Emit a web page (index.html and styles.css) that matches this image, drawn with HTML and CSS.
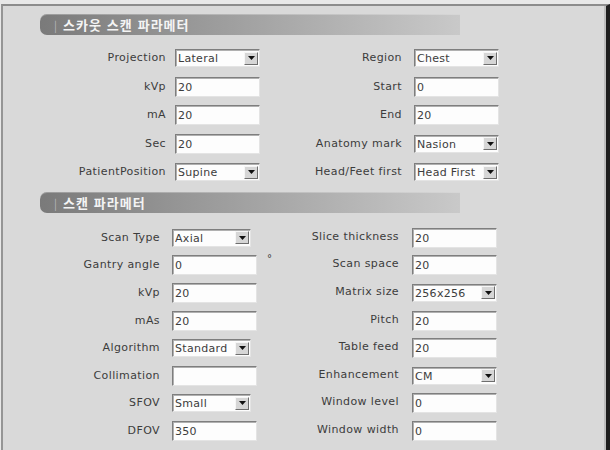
FILE: index.html
```html
<!DOCTYPE html>
<html>
<head>
    <meta charset="utf-8">
    <title>스캔 파라메터</title>
    <link rel="stylesheet" href="styles.css">
</head>
<body>
    <div class="window">
        <div class="section-header"><span class="bar">|</span>스카웃 스캔 파라메터</div>
        <div class="params params-scout">
            <div class="lbl">Projection</div>
            <div class="combo"><span class="combo-value">Lateral</span><span class="combo-btn"><svg width="7" height="4" viewBox="0 0 7 4"><path d="M0 0h7L3.5 4z"/></svg></span></div>
            <div class="lbl">Region</div>
            <div class="combo"><span class="combo-value">Chest</span><span class="combo-btn"><svg width="7" height="4" viewBox="0 0 7 4"><path d="M0 0h7L3.5 4z"/></svg></span></div>

            <div class="lbl">kVp</div>
            <input class="field" type="text" value="20">
            <div class="lbl">Start</div>
            <input class="field" type="text" value="0">

            <div class="lbl">mA</div>
            <input class="field" type="text" value="20">
            <div class="lbl">End</div>
            <input class="field" type="text" value="20">

            <div class="lbl">Sec</div>
            <input class="field" type="text" value="20">
            <div class="lbl">Anatomy mark</div>
            <div class="combo"><span class="combo-value">Nasion</span><span class="combo-btn"><svg width="7" height="4" viewBox="0 0 7 4"><path d="M0 0h7L3.5 4z"/></svg></span></div>

            <div class="lbl">PatientPosition</div>
            <div class="combo"><span class="combo-value">Supine</span><span class="combo-btn"><svg width="7" height="4" viewBox="0 0 7 4"><path d="M0 0h7L3.5 4z"/></svg></span></div>
            <div class="lbl">Head/Feet first</div>
            <div class="combo"><span class="combo-value">Head First</span><span class="combo-btn"><svg width="7" height="4" viewBox="0 0 7 4"><path d="M0 0h7L3.5 4z"/></svg></span></div>
        </div>

        <div class="section-header section-header-scan"><span class="bar">|</span>스캔 파라메터</div>
        <div class="params params-scan">
            <div class="lbl">Scan Type</div>
            <div class="combo combo-short"><span class="combo-value">Axial</span><span class="combo-btn"><svg width="7" height="4" viewBox="0 0 7 4"><path d="M0 0h7L3.5 4z"/></svg></span></div>
            <div class="lbl lbl-right">Slice thickness</div>
            <input class="field" type="text" value="20">

            <div class="lbl">Gantry angle</div>
            <input class="field" type="text" value="0">
            <div class="lbl lbl-right lbl-unit"><span class="unit">°</span><span>Scan space</span></div>
            <input class="field" type="text" value="20">

            <div class="lbl">kVp</div>
            <input class="field" type="text" value="20">
            <div class="lbl lbl-right">Matrix size</div>
            <div class="combo"><span class="combo-value">256x256</span><span class="combo-btn"><svg width="7" height="4" viewBox="0 0 7 4"><path d="M0 0h7L3.5 4z"/></svg></span></div>

            <div class="lbl">mAs</div>
            <input class="field" type="text" value="20">
            <div class="lbl lbl-right">Pitch</div>
            <input class="field" type="text" value="20">

            <div class="lbl">Algorithm</div>
            <div class="combo combo-short"><span class="combo-value">Standard</span><span class="combo-btn"><svg width="7" height="4" viewBox="0 0 7 4"><path d="M0 0h7L3.5 4z"/></svg></span></div>
            <div class="lbl lbl-right">Table feed</div>
            <input class="field" type="text" value="20">

            <div class="lbl">Collimation</div>
            <input class="field" type="text" value="">
            <div class="lbl lbl-right">Enhancement</div>
            <div class="combo"><span class="combo-value">CM</span><span class="combo-btn"><svg width="7" height="4" viewBox="0 0 7 4"><path d="M0 0h7L3.5 4z"/></svg></span></div>

            <div class="lbl">SFOV</div>
            <div class="combo combo-short"><span class="combo-value">Small</span><span class="combo-btn"><svg width="7" height="4" viewBox="0 0 7 4"><path d="M0 0h7L3.5 4z"/></svg></span></div>
            <div class="lbl lbl-right">Window level</div>
            <input class="field" type="text" value="0">

            <div class="lbl">DFOV</div>
            <input class="field" type="text" value="350">
            <div class="lbl lbl-right">Window width</div>
            <input class="field" type="text" value="0">
        </div>
    </div>
</body>
</html>
```

FILE: styles.css
```css
body {
    margin: 0;
    padding: 0;
    background-color: #e8e8e8;
    font-family: "DejaVu Sans", "Noto Sans CJK KR", sans-serif;
    font-size: 11px;
    color: #3c3c3c;
}
.window {
    box-sizing: border-box;
    height: 446px;
    margin: 4px 0 0 1px;
    border-top: 2px solid #8c8c8c;
    border-left: 2px solid #959595;
    border-right: 4px solid #1e1e1e;
    box-shadow: inset -2px 0 0 #bdbdbd;
    background-color: #d9d9d9;
    overflow: hidden;
}

/* rounded section title bar */
.section-header {
    width: 420px;
    height: 21px;
    margin: 8px 0 0 37px;
    padding-left: 14px;
    box-sizing: border-box;
    border-radius: 7px 0 0 7px;
    background: linear-gradient(to right, #7a7a7a, #979797 35%, #b2b2b2 70%, #c9c9c9);
    box-shadow: inset 0 1px 0 rgba(255,255,255,0.25);
    color: #f4f4f4;
    font-family: "Noto Sans CJK KR", sans-serif;
    font-weight: 700;
    font-size: 13px;
    line-height: 21px;
    letter-spacing: 1px;
    word-spacing: 1px;
    white-space: nowrap;
}
.section-header .bar {
    font-weight: 400;
    color: #b8b8b8;
    margin-right: 5px;
    font-size: 11px;
}
.section-header-scan {
    margin-top: 5.5px;
}

.params {
    display: grid;
    align-items: center;
}
.params-scout {
    margin-top: 9px;
    grid-template-columns: 172px 85px 154px 85px;
    grid-auto-rows: 28.5px;
}
.params-scout .lbl:nth-child(4n+1) {
    padding-right: 9px;
}
.params-scout .lbl:nth-child(4n+3) {
    padding-right: 12px;
}
.params-scan {
    margin-top: 11px;
    grid-template-columns: 169px 85px 155px 86px;
    grid-auto-rows: 27.6px;
}
.params-scan .lbl {
    padding-right: 12px;
}
.params-scan .lbl-right {
    padding-right: 13px;
    padding-bottom: 3px;
}

.lbl {
    text-align: right;
    letter-spacing: 0.4px;
    white-space: nowrap;
    padding-bottom: 1px;
}
.lbl-unit {
    display: flex;
    justify-content: space-between;
    align-self: stretch;
    align-items: center;
}
.lbl-unit .unit {
    align-self: flex-start;
    margin: 1px 0 0 10px;
    font-size: 10px;
}

/* sunken text box */
.field {
    box-sizing: border-box;
    width: 85px;
    height: 20px;
    margin: 0;
    padding: 1px 2px 0;
    border: 1px solid;
    border-color: #7e7e7e #e4e4e4 #e4e4e4 #7e7e7e;
    box-shadow: inset 1px 1px 0 #b0b0b0;
    background-color: #fdfdfd;
    font-family: "DejaVu Sans", sans-serif;
    font-size: 11px;
    letter-spacing: 0.3px;
    color: #3c3c3c;
    outline: none;
}

/* drop-down list */
.combo {
    box-sizing: border-box;
    display: flex;
    align-items: center;
    width: 85px;
    height: 18px;
    padding: 1px 1px 1px 2px;
    border: 1px solid;
    border-color: #7e7e7e #e4e4e4 #e4e4e4 #7e7e7e;
    box-shadow: inset 1px 1px 0 #b0b0b0;
    background-color: #fdfdfd;
}
.combo-short {
    width: 79px;
}
.combo-value {
    flex: 1;
    letter-spacing: 0.3px;
    white-space: nowrap;
    overflow: hidden;
    padding-top: 1px;
}
.combo-btn {
    box-sizing: border-box;
    display: flex;
    align-items: center;
    justify-content: center;
    width: 14px;
    height: 13px;
    border: 1px solid;
    border-color: #f6f6f6 #6e6e6e #6e6e6e #f6f6f6;
    background-color: #d6d6d6;
}
.combo-btn svg {
    fill: #111;
}
```
